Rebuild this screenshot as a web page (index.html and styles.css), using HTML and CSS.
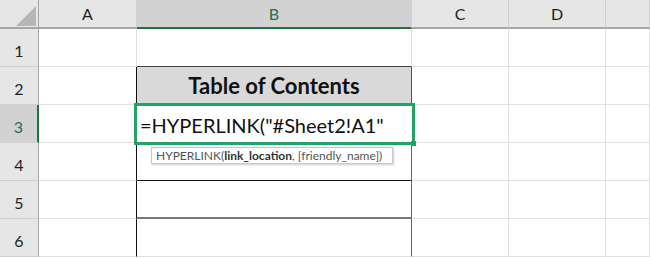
FILE: index.html
```html
<html>
<head>
  <meta http-equiv="Content-type" content="text/html;charset=UTF-8">
  <title>Table of Contents - HYPERLINK</title>
  <link rel="stylesheet" href="styles.css">
</head>
<body>
  <div class="sheet">
    <div class="corner"></div>
    <div class="colhead">A</div>
    <div class="colhead sel">B</div>
    <div class="colhead">C</div>
    <div class="colhead">D</div>
    <div class="colhead"></div>

    <div class="rowhead">1</div>
    <div class="cell"></div>
    <div class="cell top"></div>
    <div class="cell"></div>
    <div class="cell"></div>
    <div class="cell"></div>

    <div class="rowhead">2</div>
    <div class="cell edge"></div>
    <div class="cell toc">Table of Contents</div>
    <div class="cell"></div>
    <div class="cell"></div>
    <div class="cell"></div>

    <div class="rowhead sel">3</div>
    <div class="cell edge"></div>
    <div class="cell side"></div>
    <div class="cell"></div>
    <div class="cell"></div>
    <div class="cell"></div>

    <div class="rowhead">4</div>
    <div class="cell edge"></div>
    <div class="cell side dark"></div>
    <div class="cell"></div>
    <div class="cell"></div>
    <div class="cell"></div>

    <div class="rowhead">5</div>
    <div class="cell edge"></div>
    <div class="cell side grey"></div>
    <div class="cell"></div>
    <div class="cell"></div>
    <div class="cell"></div>

    <div class="rowhead">6</div>
    <div class="cell edge"></div>
    <div class="cell side"></div>
    <div class="cell"></div>
    <div class="cell"></div>
    <div class="cell"></div>

    <!-- cell being edited, drawn over the grid -->
    <div class="editbox">=HYPERLINK("#Sheet2!A1"</div>
    <div class="tip">HYPERLINK(<b>link_location</b>, [friendly_name])</div>
  </div>
</body>
</html>
```

FILE: styles.css
```css
body{
    margin:0;
    background:white;
    font-family: Lato, "Open Sans", sans-serif;
}
.sheet{
    position: relative;
    display: grid;
    grid-template-columns: 39px 98px 275px 97px 97px 1fr;
    grid-template-rows: 29px repeat(6, 38px);
    width: 650px;
    height: 258px;
    overflow: hidden;
}
.corner, .colhead, .rowhead, .cell{
    box-sizing: border-box;
    border-right: 1px solid #e1e1e1;
    border-bottom: 1px solid #e1e1e1;
}
.corner{
    display: flex;
    justify-content: flex-end;
    align-items: flex-end;
    padding: 0 2px 1px 0;
    background: #e6e6e6;
    border-right-color: #a6a6a6;
    border-bottom: 2px solid #a6a6a6;
}
.corner::after{
    content: "";
    width: 20px;
    height: 20px;
    background: #b6b6b6;
    clip-path: polygon(100% 0, 100% 100%, 0 100%);
}
.colhead{
    display: flex;
    justify-content: center;
    align-items: flex-end;
    padding-bottom: 4px;
    background: #e6e6e6;
    border-right-color: #d0d0d0;
    border-bottom: 2px solid #a6a6a6;
    font-size: 16px;
    color: #1e1e1e;
}
.colhead.sel{
    background: #d2d2d2;
    color: #217346;
    border-bottom-color: #217346;
}
.rowhead{
    display: flex;
    justify-content: center;
    align-items: flex-end;
    padding-bottom: 6px;
    background: #e6e6e6;
    border-right-color: #a6a6a6;
    border-bottom-color: #d0d0d0;
    font-size: 16px;
    color: #1e1e1e;
}
.rowhead.sel{
    background: #d2d2d2;
    color: #217346;
    border-right: 2px solid #217346;
}
.cell{
    background: white;
}
.edge{
    border-right: 1px solid #111;
}
.top{
    border-bottom: 1px solid #444;
}
.toc{
    display: flex;
    justify-content: center;
    align-items: center;
    background: #d9d9d9;
    border-right: 1px solid #555;
    font-size: 22px;
    font-weight: bold;
    color: #111;
}
.side{
    border-right: 1px solid #666;
}
.dark{
    border-bottom: 1px solid #111;
}
.grey{
    border-bottom: 2px solid #7a7a7a;
}
.editbox{
    position: absolute;
    left: 134px;
    top: 103px;
    width: 281px;
    height: 42px;
    box-sizing: border-box;
    display: flex;
    align-items: center;
    padding: 1px 0 0 3px;
    border: 3px solid #21a366;
    background: white;
    font-size: 20px;
    color: #111;
    white-space: nowrap;
}
.editbox::after{
    content: "";
    position: absolute;
    right: -4px;
    bottom: -4px;
    width: 5px;
    height: 5px;
    background: #21a366;
}
.tip{
    position: absolute;
    left: 151px;
    top: 147px;
    width: 242px;
    height: 17px;
    box-sizing: border-box;
    padding: 0 4px;
    border: 1px solid #c8c8c8;
    background: white;
    box-shadow: 1px 1px 2px rgba(0,0,0,0.2);
    font-size: 12px;
    line-height: 15px;
    color: #555;
    white-space: nowrap;
}
.tip b{
    color: #333;
}
```
